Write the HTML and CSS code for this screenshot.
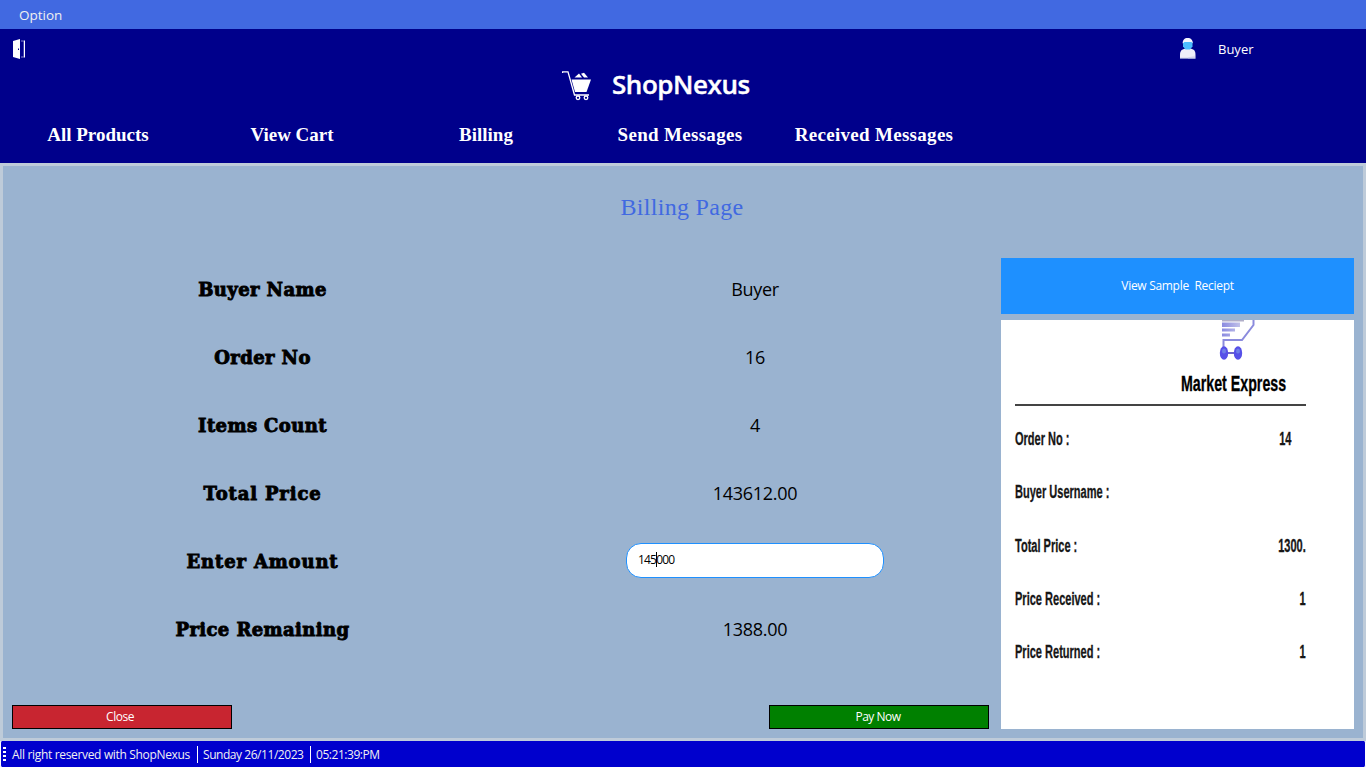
FILE: index.html
```html
<!DOCTYPE html>
<html lang="en">
<head>
<meta charset="utf-8">
<title>ShopNexus</title>
<link rel="stylesheet" href="styles.css">
</head>
<body>
<div class="app">
  <div class="menubar"><span class="menu-item">Option</span></div>
  <header class="header">
    <div class="userbar">
      <svg class="door" width="13" height="20" viewBox="0 0 13 20"><path d="M0 2 7 0v20l-7-2z" fill="#fff"/><path d="M8 2h3v16H8" fill="none" stroke="#8585cc" stroke-width="1"/><path d="M11.500 1.500v17" stroke="#fff"/><path d="M5 9.500h1v1.500H5z" fill="#00008b"/></svg>
      <div class="user">
        <svg class="avatar" width="16" height="21" viewBox="0 0 16 21"><path d="M0 20.500v-4C0 12 3 10.500 8 10.500S15.500 12 15.500 16.500v4z" fill="#eeeefa"/><path d="M8 20.500v-1l7-2v3z" fill="#dcdcf0"/><path d="M0 20.300h15.500" stroke="#8c96d2" stroke-width=".7"/><path d="M3 3.500h9.500v5L10 11.500H5.500L3 8.500z" fill="#4cbcff"/><path d="M2.700 5.500C2.500 2 4.500 0 7.700 0s5.300 2 5 5.500L11.500 4h-7z" fill="#f5f5ff"/></svg>
        <span class="username">Buyer</span>
      </div>
    </div>
    <div class="brand">
      <svg class="cart" width="31" height="30" viewBox="0 0 31 30"><path d="M.5 2V.800H6L12.500 24H27" fill="none" stroke="#fff" stroke-width="1.300"/><path d="M9.500 8.500H29L24.500 21H13z" fill="#fff"/><path d="M12.500 6.500 17 2.500l3 4zM19 2.800l3-1 4 4.700h-4z" fill="#fff"/><circle cx="16" cy="26.800" r="1.800" fill="none" stroke="#fff" stroke-width="1.300"/><circle cx="24" cy="26.800" r="1.800" fill="none" stroke="#fff" stroke-width="1.300"/></svg>
      <span class="brand-name">ShopNexus</span>
    </div>
    <nav class="nav"><span>All Products</span><span>View Cart</span><span>Billing</span><span class="wide">Send Messages</span><span class="wide">Received Messages</span></nav>
  </header>
  <main class="main">
    <h1 class="title">Billing Page</h1>
    <div class="content">
      <section class="billing">
        <div class="form">
          <div class="label">Buyer Name</div><div class="value">Buyer</div>
          <div class="label">Order No</div><div class="value">16</div>
          <div class="label">Items Count</div><div class="value">4</div>
          <div class="label loose">Total Price</div><div class="value">143612.00</div>
          <div class="label loose">Enter Amount</div><div class="value"><div class="amount"><span class="digits">145<i class="caret"></i>000</span></div></div>
          <div class="label">Price Remaining</div><div class="value">1388.00</div>
        </div>
        <div class="actions"><button class="btn close">Close</button><button class="btn pay">Pay Now</button></div>
      </section>
      <aside class="side">
        <button class="sample">View Sample&nbsp; Reciept</button>
        <div class="receipt">
          <svg class="logo" width="37" height="41" viewBox="0 0 37 41"><defs><linearGradient id="fade" x1="0" y1="0" x2="1" y2="0"><stop offset="0" stop-color="#8a8ae0"/><stop offset="1" stop-color="#c0c0e8"/></linearGradient></defs><path d="M3 0h22v1.500H3z" fill="#b0aec8"/><path d="M3 2.500h18v4.500H3zM3 8.500h13v3H3zM3 13.500h8v3H3z" fill="url(#fade)"/><path d="M34.500 0v5L23 20H4.500v13" fill="none" stroke="#8b8bdd" stroke-width="2"/><path d="M5 33h14" stroke="#6c64cc" stroke-width="2"/><ellipse cx="5" cy="33" rx="4.200" ry="6.800" fill="#5650e8"/><ellipse cx="19" cy="33" rx="4.200" ry="6.800" fill="#5650e8"/><ellipse cx="5" cy="31" rx="2" ry="2.500" fill="#6e7ee8"/><ellipse cx="19" cy="31" rx="2" ry="2.500" fill="#6e7ee8"/></svg>
          <div class="market"><span>Market Express</span></div>
          <div class="rows">
            <div class="row"><span>Order No :</span><span class="num order">14</span></div>
            <div class="row"><span>Buyer Username :</span></div>
            <div class="row"><span>Total Price :</span><span class="num">1300.</span></div>
            <div class="row"><span>Price Received :</span><span class="num">1</span></div>
            <div class="row"><span>Price Returned :</span><span class="num">1</span></div>
          </div>
        </div>
      </aside>
    </div>
  </main>
  <footer class="status"><i class="grip"></i><span class="s1">All right reserved with ShopNexus</span><i class="sep"></i><span class="s2">Sunday 26/11/2023</span><i class="sep"></i><span class="s3">05:21:39:PM</span></footer>
</div>
</body>
</html>
```
FILE: styles.css
```css
* { box-sizing: border-box; }
body { margin: 0; font-family: "Open Sans", "Noto Sans", sans-serif; }
.app { width: 1366px; height: 768px; display: flex; flex-direction: column; overflow: hidden; background: #fff; }
.menubar { height: 29px; background: #4169e1; color: #f0f0f0; padding-left: 19px; font-size: 13.5px; line-height: 31px; }
.header { height: 134px; background: #00008b; color: #fff; display: flex; flex-direction: column; }
.userbar { height: 39px; display: flex; justify-content: space-between; padding: 10px 112px 0 13px; }
.user { display: flex; gap: 22px; }
.avatar { margin-top: -1px; }
.username { width: 36px; font-size: 13px; line-height: 21px; white-space: nowrap; }
.brand { height: 36px; display: flex; padding-left: 562px; }
.cart { margin-top: 3px; margin-right: 19px; }
.brand-name { font-size: 26px; font-weight: 600; line-height: 32px; letter-spacing: -0.45px; -webkit-text-stroke: 0.4px #fff; }
.nav { display: grid; grid-template-columns: repeat(5, 194px); padding-left: 1px; text-align: center; font: bold 19px/62px "Liberation Serif", serif; height: 59px; }
.wide { letter-spacing: 0.3px; }
.main { height: 578px; border: 3px solid #becbd9; background: #9ab3d0; padding: 0 9px; }
.title { margin: 0; height: 89px; padding-right: 2px; text-align: center; font: 24px/83px "Liberation Serif", serif; letter-spacing: 0.3px; color: #4169e1; }
.content { display: flex; justify-content: space-between; }
.billing { width: 977px; }
.form { display: grid; grid-template-columns: 493px 493px; grid-auto-rows: 68px; padding-left: 4px; width: 990px; }
.label, .value { display: flex; align-items: center; justify-content: center; color: #000; }
.label { font: bold 18px "DejaVu Serif", serif; letter-spacing: 0.4px; -webkit-text-stroke: 0.9px #000; }
.loose { letter-spacing: 0.85px; }
.value { font-size: 18px; letter-spacing: -0.3px; padding-right: 1px; }
.amount { width: 258px; height: 35px; margin: 0 0 2px 0; border: 1px solid #1e90ff; border-radius: 15px; background: #fff; padding-left: 11px; font-size: 12px; line-height: 32px; }
.digits { letter-spacing: -0.8px; }
.caret { display: inline-block; width: 1px; height: 15px; margin-right: -1px; background: #000; vertical-align: -3px; }
.actions { display: flex; justify-content: space-between; margin-top: 42px; }
.btn { width: 220px; height: 24px; border: 1px solid #000; padding: 0; color: #fff; font: 12px/20px "Open Sans", sans-serif; letter-spacing: -0.5px; }
.close { background: #c82530; padding-right: 4px; }
.pay { background: #008000; padding-right: 2px; }
.side { width: 353px; padding-top: 3px; display: flex; flex-direction: column; gap: 6px; }
.sample { height: 56px; border: 0; padding-bottom: 3px; background: #1e90ff; color: #fff; font: 12px "Open Sans", sans-serif; letter-spacing: -0.3px; }
.receipt { height: 409px; background: #fff; font-family: "Liberation Sans", sans-serif; font-weight: bold; color: #161616; }
.logo { display: block; margin-left: 218px; }
.market { width: 291px; height: 45px; margin-left: 14px; border-bottom: 2px solid #444; font-size: 22.5px; line-height: 45px; color: #000; white-space: nowrap; }
.market span { display: inline-block; margin-left: 166px; transform: scaleX(.632); transform-origin: left; -webkit-text-stroke: 0.3px #000; }
.rows { width: 291px; margin-left: 14px; padding-top: 7px; }
.row { height: 53.3px; display: flex; justify-content: space-between; line-height: 53px; font-size: 17.5px; }
.row span { transform: scaleX(.63); transform-origin: left; white-space: nowrap; -webkit-text-stroke: 0.3px #161616; }
.row .num { transform-origin: right; }
.row .order { margin-right: 15px; }
.status { height: 26px; background: #0000cd; border-left: 1px solid #fff; border-right: 1px solid #fff; border-radius: 2px; display: flex; align-items: center; color: #f0f0f0; font-size: 12px; white-space: nowrap; }
.grip { width: 3px; height: 15px; margin: 0 5px 0 2px; background: repeating-linear-gradient(#fff 0 2px, transparent 2px 4px); }
.s1 { width: 186px; padding-left: 1px; letter-spacing: -0.33px; }
.sep { width: 1px; height: 17px; background: #fff; margin-right: 5px; }
.s2 { width: 107px; letter-spacing: -0.45px; }
.s3 { letter-spacing: -0.45px; }
```
